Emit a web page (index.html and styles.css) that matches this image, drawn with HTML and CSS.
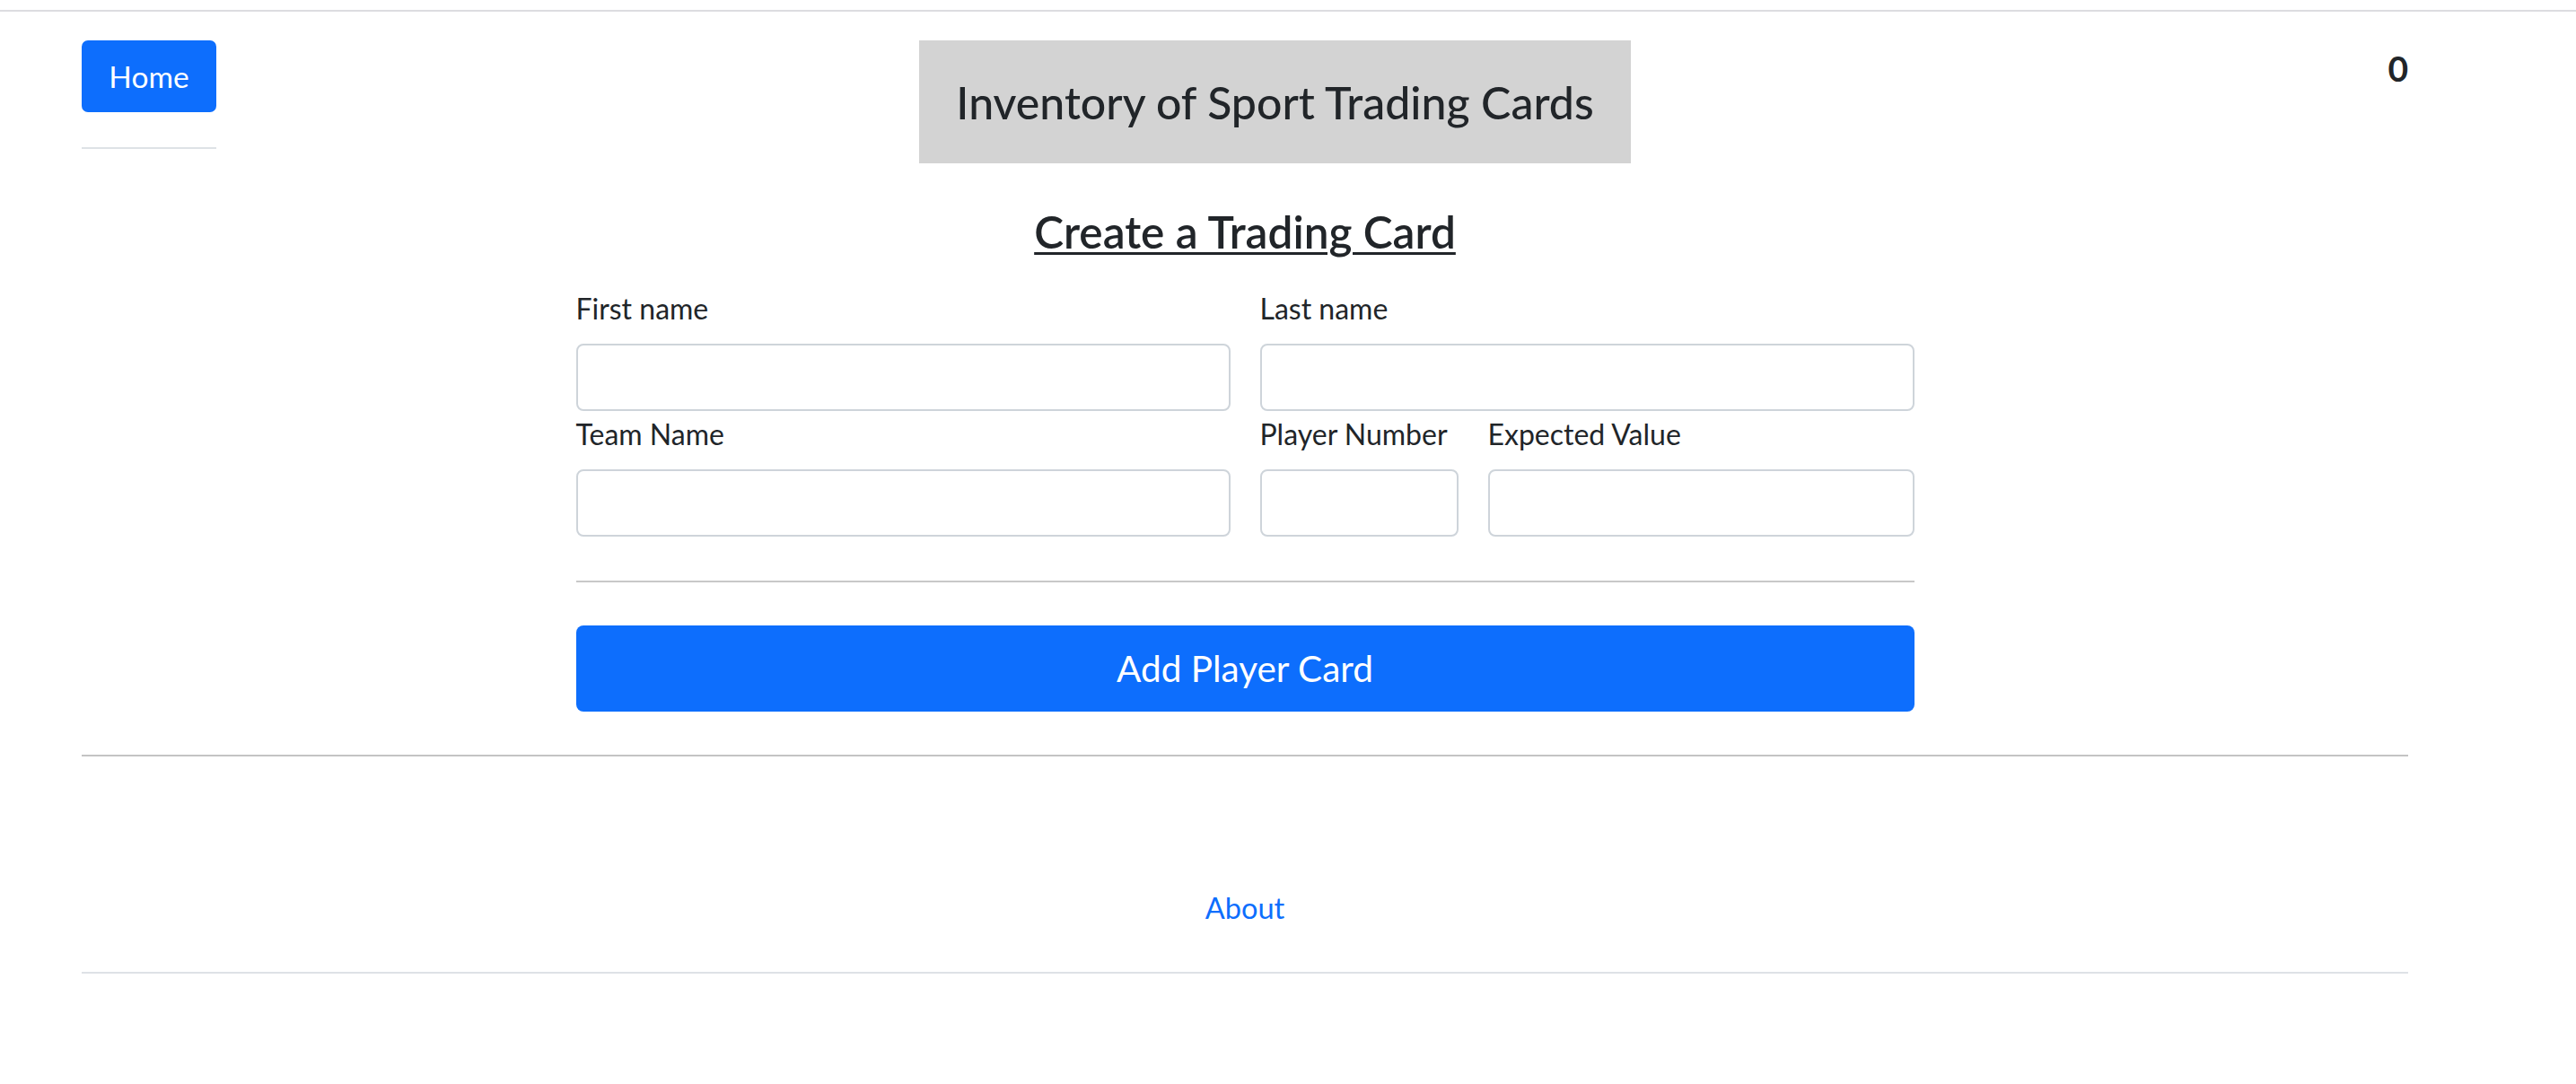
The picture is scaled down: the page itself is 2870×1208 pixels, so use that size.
FILE: index.html
```html
<!DOCTYPE html>
<html lang="en">
<head>
<meta charset="utf-8">
<title>Inventory of Sport Trading Cards</title>
<link rel="stylesheet" href="styles.css">
</head>
<body>
<div class="topbar"></div>
<div class="page">
  <header class="masthead">
    <div class="nav-col">
      <a class="btn-home" href="#">Home</a>
      <hr class="nav-rule">
    </div>
    <div class="title-box"><h1 class="site-title">Inventory of Sport Trading Cards</h1></div>
    <div class="counter">0</div>
  </header>
  <main class="content">
    <h2 class="form-title">Create a Trading Card</h2>
    <form class="card-form">
      <div class="form-row row-two">
        <div class="field"><label class="field-label">First name</label><input class="field-input" type="text"></div>
        <div class="field"><label class="field-label">Last name</label><input class="field-input" type="text"></div>
      </div>
      <div class="form-row row-three">
        <div class="field"><label class="field-label">Team Name</label><input class="field-input" type="text"></div>
        <div class="field"><label class="field-label">Player Number</label><input class="field-input" type="text"></div>
        <div class="field"><label class="field-label">Expected Value</label><input class="field-input" type="text"></div>
      </div>
      <hr class="form-rule">
      <button class="btn-submit" type="button">Add Player Card</button>
    </form>
  </main>
  <hr class="page-rule">
  <footer class="footer">
    <a class="footer-link" href="#">About</a>
  </footer>
  <hr class="footer-rule">
</div>
</body>
</html>
```

FILE: styles.css
```css
* { box-sizing: border-box; }

body {
  margin: 0;
  background: #ffffff;
  color: #212529;
  font-family: Lato, "Open Sans", sans-serif;
}

.topbar {
  margin-top: 11px;
  height: 2px;
  background: #dcdce0;
}

.page {
  margin: 0 187px 0 91px;
  padding-top: 32px;
}

.masthead {
  display: grid;
  grid-template-columns: 933px 793px 1fr;
  align-items: start;
}

.nav-col {
  width: 150px;
}

.btn-home {
  display: flex;
  align-items: center;
  justify-content: center;
  width: 150px;
  height: 80px;
  background: #0d6efd;
  color: #ffffff;
  border-radius: 7px;
  font-size: 33.5px;
  line-height: 1.2;
  text-decoration: none;
}

.nav-rule {
  margin: 39px 0 0;
  border: 0;
  border-top: 2px solid #dee2e6;
}

.title-box {
  height: 137px;
  background: #d3d3d3;
  display: flex;
  align-items: center;
  justify-content: center;
}

.site-title {
  margin: 0;
  font-size: 50px;
  font-weight: 500;
  line-height: 1.2;
  color: #212529;
}

.counter {
  justify-self: end;
  margin-top: 8px;
  font-size: 39px;
  font-weight: 700;
  line-height: 1.2;
}

.content {
  margin-top: 47px;
}

.form-title {
  margin: 0;
  text-align: center;
  font-size: 49.5px;
  font-weight: 600;
  line-height: 1.2;
  text-decoration: underline;
  text-decoration-thickness: 3px;
  text-underline-offset: 4px;
}

.card-form {
  width: 1491px;
  margin: 36px auto 0;
}

.form-row {
  display: grid;
  column-gap: 33px;
}

.row-two {
  grid-template-columns: 729px 729px;
}

.row-three {
  grid-template-columns: 729px 221px 1fr;
  margin-top: 6px;
}

.field-label {
  display: block;
  font-size: 32px;
  line-height: 39px;
  margin-bottom: 20px;
  white-space: nowrap;
}

.field-input {
  display: block;
  width: 100%;
  height: 75px;
  border: 2px solid #ced4da;
  border-radius: 8px;
  background: #ffffff;
}

.form-rule {
  margin: 49px 0 48px;
  border: 0;
  border-top: 2px solid #c8c8c8;
}

.btn-submit {
  display: block;
  width: 100%;
  height: 96px;
  border: 0;
  border-radius: 8px;
  background: #0d6efd;
  color: #ffffff;
  font-family: Lato, "Open Sans", sans-serif;
  font-size: 40.5px;
  line-height: 1.2;
}

.page-rule {
  margin: 48px 0 0;
  border: 0;
  border-top: 2px solid #c4c4c4;
}

.footer {
  padding-top: 151px;
  text-align: center;
  font-size: 32.5px;
  line-height: 36px;
}

.footer-link {
  color: #0d6efd;
  text-decoration: none;
}

.footer-rule {
  margin: 53px 0 0;
  border: 0;
  border-top: 2px solid #dee2e6;
}
```
